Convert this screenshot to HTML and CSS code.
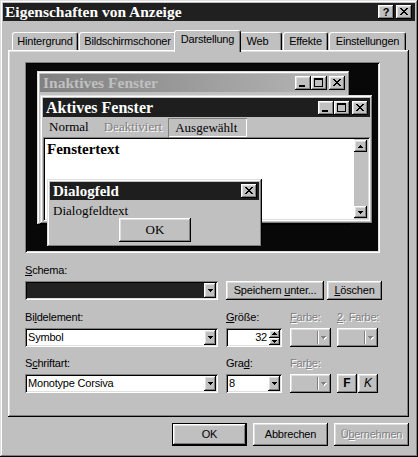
FILE: index.html
```html
<!DOCTYPE html>
<html lang="de">
<head>
<meta charset="utf-8">
<title>Eigenschaften von Anzeige</title>
<link rel="stylesheet" href="styles.css">
</head>
<body>
<div class="window">
  <div class="titlebar">
    <span class="title-text">Eigenschaften von Anzeige</span>
    <div class="cap-btns">
      <span class="cap-btn g-help">?</span>
      <span class="cap-btn g-close sep"><svg width="8" height="7" viewBox="0 0 8 7"><path d="M0 0h2v1H0zM6 0h2v1H6zM1 1h2v1H1zM5 1h2v1H5zM2 2h4v1H2zM3 3h2v1H3zM2 4h4v1H2zM1 5h2v1H1zM5 5h2v1H5zM0 6h2v1H0zM6 6h2v1H6z" fill="#000"/></svg></span>
    </div>
  </div>
  <div class="content">
    <div class="tabs">
      <div class="tab t-h">Hintergrund</div>
      <div class="tab t-b">Bildschirmschoner</div>
      <div class="tab sel">Darstellung</div>
      <div class="tab t-w">Web</div>
      <div class="tab t-e">Effekte</div>
      <div class="tab t-s">Einstellungen</div>
    </div>
    <div class="panel">
      <div class="preview">
        <div class="win w-inactive">
          <div class="caption inactive">
            <span>Inaktives Fenster</span>
            <div class="cap-btns">
              <span class="cap-btn g-min"><svg width="6" height="2" viewBox="0 0 6 2"><path d="M0 0h6v2H0z" fill="#000"/></svg></span>
              <span class="cap-btn g-max"><svg width="9" height="9" viewBox="0 0 9 9"><path d="M0 0h9v9H0zM1 2v6h7V2z" fill="#000" fill-rule="evenodd"/></svg></span>
              <span class="cap-btn g-close sep"><svg width="8" height="7" viewBox="0 0 8 7"><path d="M0 0h2v1H0zM6 0h2v1H6zM1 1h2v1H1zM5 1h2v1H5zM2 2h4v1H2zM3 3h2v1H3zM2 4h4v1H2zM1 5h2v1H1zM5 5h2v1H5zM0 6h2v1H0zM6 6h2v1H6z" fill="#000"/></svg></span>
            </div>
          </div>
        </div>
        <div class="win w-active">
          <div class="caption active">
            <span>Aktives Fenster</span>
            <div class="cap-btns">
              <span class="cap-btn g-min"><svg width="6" height="2" viewBox="0 0 6 2"><path d="M0 0h6v2H0z" fill="#000"/></svg></span>
              <span class="cap-btn g-max"><svg width="9" height="9" viewBox="0 0 9 9"><path d="M0 0h9v9H0zM1 2v6h7V2z" fill="#000" fill-rule="evenodd"/></svg></span>
              <span class="cap-btn g-close sep"><svg width="8" height="7" viewBox="0 0 8 7"><path d="M0 0h2v1H0zM6 0h2v1H6zM1 1h2v1H1zM5 1h2v1H5zM2 2h4v1H2zM3 3h2v1H3zM2 4h4v1H2zM1 5h2v1H1zM5 5h2v1H5zM0 6h2v1H0zM6 6h2v1H6z" fill="#000"/></svg></span>
            </div>
          </div>
          <div class="menu">
            <span class="mi">Normal</span>
            <span class="mi mi-dis">Deaktiviert</span>
            <span class="mi mi-sel">Ausgewählt</span>
          </div>
          <div class="textarea">
            <div class="ta-text">Fenstertext</div>
            <div class="scroll">
              <span class="sb-btn"><svg width="5" height="3" viewBox="0 0 5 3"><path d="M2 0h1v1h1v1h1v1H0V2h1V1h1z" fill="#000"/></svg></span>
              <span class="sb-btn"><svg width="5" height="3" viewBox="0 0 5 3"><path d="M0 0h5v1H4v1H3v1H2V2H1V1H0z" fill="#000"/></svg></span>
            </div>
          </div>
        </div>
        <div class="win w-dialog">
          <div class="caption dlg">
            <span>Dialogfeld</span>
            <div class="cap-btns">
              <span class="cap-btn g-close"><svg width="8" height="7" viewBox="0 0 8 7"><path d="M0 0h2v1H0zM6 0h2v1H6zM1 1h2v1H1zM5 1h2v1H5zM2 2h4v1H2zM3 3h2v1H3zM2 4h4v1H2zM1 5h2v1H1zM5 5h2v1H5zM0 6h2v1H0zM6 6h2v1H6z" fill="#000"/></svg></span>
            </div>
          </div>
          <div class="dlg-text">Dialogfeldtext</div>
          <div class="dlg-ok">OK</div>
        </div>
      </div>

      <div class="form">
        <div class="row">
          <div class="fld c1">
            <div class="lbl"><u>S</u>chema:</div>
            <div class="combo">
              <div class="combo-val dark"></div>
              <div class="combo-dd"><svg width="5" height="3" viewBox="0 0 5 3"><path d="M0 0h5v1H4v1H3v1H2V2H1V1H0z" fill="#000"/></svg></div>
            </div>
          </div>
          <div class="btn b-save">Speichern <u>u</u>nter...</div>
          <div class="btn b-del"><u>L</u>öschen</div>
        </div>

        <div class="row r2">
          <div class="fld c1">
            <div class="lbl">Bi<u>l</u>delement:</div>
            <div class="combo">
              <div class="combo-val">Symbol</div>
              <div class="combo-dd"><svg width="5" height="3" viewBox="0 0 5 3"><path d="M0 0h5v1H4v1H3v1H2V2H1V1H0z" fill="#000"/></svg></div>
            </div>
          </div>
          <div class="fld c2">
            <div class="lbl"><u>G</u>röße:</div>
            <div class="spin">
              <div class="spin-val">32</div>
              <div class="spin-btns">
                <span class="spin-btn"><svg width="5" height="3" viewBox="0 0 5 3"><path d="M2 0h1v1h1v1h1v1H0V2h1V1h1z" fill="#000"/></svg></span>
                <span class="spin-btn"><svg width="5" height="3" viewBox="0 0 5 3"><path d="M0 0h5v1H4v1H3v1H2V2H1V1H0z" fill="#000"/></svg></span>
              </div>
            </div>
          </div>
          <div class="fld c3">
            <div class="lbl dis"><u>F</u>arbe:</div>
            <div class="cbtn">
              <span class="cb-sw"></span><span class="cb-sep"></span>
              <span class="cb-arr"><svg width="6" height="4" viewBox="0 0 6 4"><path d="M1 1h5v1H5v1H4v1H3V3H2V2H1z" fill="#fff"/><path d="M0 0h5v1H4v1H3v1H2V2H1V1H0z" fill="#808080"/></svg></span>
            </div>
          </div>
          <div class="fld c4">
            <div class="lbl dis"><u>2</u>. Farbe:</div>
            <div class="cbtn">
              <span class="cb-sw"></span><span class="cb-sep"></span>
              <span class="cb-arr"><svg width="6" height="4" viewBox="0 0 6 4"><path d="M1 1h5v1H5v1H4v1H3V3H2V2H1z" fill="#fff"/><path d="M0 0h5v1H4v1H3v1H2V2H1V1H0z" fill="#808080"/></svg></span>
            </div>
          </div>
        </div>

        <div class="row r3">
          <div class="fld c1">
            <div class="lbl">S<u>c</u>hriftart:</div>
            <div class="combo">
              <div class="combo-val">Monotype Corsiva</div>
              <div class="combo-dd"><svg width="5" height="3" viewBox="0 0 5 3"><path d="M0 0h5v1H4v1H3v1H2V2H1V1H0z" fill="#000"/></svg></div>
            </div>
          </div>
          <div class="fld c2">
            <div class="lbl">Gra<u>d</u>:</div>
            <div class="combo">
              <div class="combo-val">8</div>
              <div class="combo-dd"><svg width="5" height="3" viewBox="0 0 5 3"><path d="M0 0h5v1H4v1H3v1H2V2H1V1H0z" fill="#000"/></svg></div>
            </div>
          </div>
          <div class="fld c3">
            <div class="lbl dis">Far<u>b</u>e:</div>
            <div class="cbtn">
              <span class="cb-sw"></span><span class="cb-sep"></span>
              <span class="cb-arr"><svg width="6" height="4" viewBox="0 0 6 4"><path d="M1 1h5v1H5v1H4v1H3V3H2V2H1z" fill="#fff"/><path d="M0 0h5v1H4v1H3v1H2V2H1V1H0z" fill="#808080"/></svg></span>
            </div>
          </div>
          <div class="fk-group">
            <div class="btn fk bold">F</div>
            <div class="btn fk ital">K</div>
          </div>
        </div>
      </div>
    </div>

    <div class="actions">
      <div class="pbtn def">OK</div>
      <div class="pbtn">Abbrechen</div>
      <div class="pbtn disabled">Ü<u>b</u>ernehmen</div>
    </div>
  </div>
</div>
</body>
</html>
```

FILE: styles.css
```css
* { box-sizing: border-box; }

body {
  margin: 0;
  background: #c0c0c0;
}

.window {
  width: 418px;
  height: 457px;
  padding: 3px;
  background: #c0c0c0;
  box-shadow: inset -1px -1px #000, inset 1px 1px #dfdfdf, inset -2px -2px #808080, inset 2px 2px #fff;
  font-family: "Liberation Sans", Arial, sans-serif;
  font-size: 11px;
  letter-spacing: -0.2px;
  color: #000;
}

/* ---------- title bar ---------- */
.titlebar {
  height: 18px;
  background: #202020;
  display: flex;
  align-items: center;
  justify-content: space-between;
  padding: 0 3px 0 2px;
}

.title-text {
  font-family: "Liberation Serif", "Times New Roman", serif;
  font-weight: bold;
  font-size: 15.5px;
  line-height: 18px;
  letter-spacing: 0;
  color: #fff;
  white-space: nowrap;
}

.cap-btns { display: flex; }

.cap-btn {
  display: block;
  width: 16px;
  height: 14px;
  background: #c0c0c0;
  box-shadow: inset -1px -1px #000, inset 1px 1px #fff, inset -2px -2px #808080, inset 2px 2px #dfdfdf;
}
.cap-btn.sep { margin-left: 2px; }
.cap-btn svg { display: block; }
.g-close { padding: 3px 0 0 4px; }
.g-min { padding: 9px 0 0 4px; }
.g-max { padding: 2px 0 0 3px; }
.g-help {
  font-weight: bold;
  font-size: 11px;
  line-height: 14px;
  text-align: center;
  letter-spacing: 0;
}

/* ---------- tabs ---------- */
.content { padding: 9px 6px 0 5px; }

.tabs {
  display: flex;
  align-items: flex-end;
  height: 20px;
  padding-left: 4px;
  position: relative;
  z-index: 1;
}

.tab {
  height: 18px;
  padding-top: 2px;
  line-height: 13px;
  text-align: center;
  white-space: nowrap;
  background: #c0c0c0;
  border-top: 1px solid #fff;
  border-left: 1px solid #fff;
  border-right: 1px solid #000;
  border-radius: 3px 3px 0 0;
  box-shadow: inset -1px 0 #808080;
}
.t-h { width: 66px; margin-right: 1px; }
.t-b { width: 97px; }
.tab.sel {
  width: 67px;
  height: 22px;
  margin: 0 -2px -2px;
  position: relative;
  z-index: 2;
}
.t-w { width: 43px; margin-right: 1px; padding-right: 6px; }
.t-e { width: 45px; margin-right: 1px; }
.t-s { width: 77px; }

/* ---------- panel ---------- */
.panel {
  width: 401px;
  height: 367px;
  padding: 12px 0 0 17px;
  box-shadow: inset -1px -1px #000, inset 1px 1px #fff, inset -2px -2px #808080, inset 2px 2px #dfdfdf;
}

.preview {
  position: relative;
  width: 355px;
  height: 191px;
  background: #080808;
  box-shadow: inset 1px 1px #808080, inset -1px -1px #fff, inset 2px 2px #000, inset -2px -2px #dfdfdf;
}

.win {
  position: absolute;
  display: flex;
  flex-direction: column;
  padding: 3px;
  background: #c0c0c0;
  box-shadow: inset -1px -1px #000, inset 1px 1px #dfdfdf, inset -2px -2px #808080, inset 2px 2px #fff;
}
.w-inactive { left: 12px; top: 9px; width: 313px; height: 154px; }
.w-active { left: 15px; top: 33px; width: 333px; height: 129px; }
.w-dialog { left: 22px; top: 117px; width: 215px; height: 68px; }

.caption {
  flex: none;
  display: flex;
  align-items: center;
  justify-content: space-between;
  padding: 0 2px 0 3px;
  background: #1e1e1e;
  color: #fff;
  font-family: "Liberation Serif", "Times New Roman", serif;
  font-weight: bold;
  letter-spacing: 0;
  white-space: nowrap;
}
.caption.inactive {
  height: 18px;
  font-size: 15.5px;
  background: linear-gradient(90deg, #808080, #b8b8b8);
  color: #c0c0c0;
}
.caption.active { height: 19px; font-size: 16px; }
.caption.dlg { height: 18px; font-size: 15px; }

.menu {
  flex: none;
  height: 20px;
  display: flex;
  align-items: center;
  padding-left: 6px;
  font-family: "Liberation Serif", "Times New Roman", serif;
  font-size: 13px;
  letter-spacing: 0;
  white-space: nowrap;
}
.mi-dis {
  margin-left: 15px;
  color: #808080;
  text-shadow: 1px 1px #fff;
}
.mi-sel {
  align-self: flex-end;
  margin-left: 6px;
  width: 79px;
  height: 19px;
  line-height: 19px;
  padding-left: 7px;
  box-shadow: inset 1px 1px #808080, inset -1px -1px #fff;
}

.textarea {
  flex: 1;
  display: flex;
  padding: 2px;
  background: #fff;
  box-shadow: inset 1px 1px #808080, inset -1px -1px #fff, inset 2px 2px #000, inset -2px -2px #dfdfdf;
}
.ta-text {
  flex: 1;
  padding: 1px 0 0 2px;
  font-family: "Liberation Serif", "Times New Roman", serif;
  font-weight: bold;
  font-size: 15px;
  line-height: 18px;
  letter-spacing: 0;
}
.scroll {
  width: 14px;
  display: flex;
  flex-direction: column;
  justify-content: space-between;
  padding: 1px 0;
  background: #c0c0c0;
}
.sb-btn {
  width: 13px;
  height: 12px;
  display: flex;
  align-items: center;
  justify-content: center;
  background: #c0c0c0;
  box-shadow: inset -1px -1px #000, inset 1px 1px #fff, inset -2px -2px #808080, inset 2px 2px #dfdfdf;
}
.sb-btn svg { display: block; }

.dlg-text {
  padding: 4px 0 0 3px;
  height: 18px;
  line-height: 14px;
  font-family: "Liberation Serif", "Times New Roman", serif;
  font-size: 13px;
  letter-spacing: 0;
}
.dlg-ok {
  margin-left: 69px;
  width: 72px;
  height: 24px;
  line-height: 24px;
  text-align: center;
  font-family: "Liberation Serif", "Times New Roman", serif;
  font-size: 13px;
  letter-spacing: 0;
  box-shadow: inset -1px -1px #000, inset 1px 1px #fff, inset -2px -2px #808080, inset 2px 2px #dfdfdf;
}

/* ---------- form ---------- */
.form { margin-top: 11px; }
.row { display: flex; align-items: flex-end; }
.r2 { margin-top: 11px; }
.r3 { margin-top: 10px; }

.fld { display: flex; flex-direction: column; }
.lbl {
  height: 13px;
  line-height: 13px;
  margin-bottom: 4px;
  white-space: nowrap;
}
.lbl.dis { color: #808080; text-shadow: 1px 1px #fff; }

.c1 { width: 193px; }
.c2 { width: 56px; margin-left: 8px; }
.c3 { width: 41px; margin-left: 8px; }
.c4 { width: 41px; margin-left: 6px; }

.combo {
  height: 19px;
  display: flex;
  padding: 2px;
  background: #fff;
  box-shadow: inset 1px 1px #808080, inset -1px -1px #fff, inset 2px 2px #000, inset -2px -2px #dfdfdf;
}
.combo-val {
  flex: 1;
  padding-left: 1px;
  line-height: 15px;
  white-space: nowrap;
  overflow: hidden;
}
.combo-val.dark { background: #222; }
.combo-dd {
  width: 12px;
  height: 15px;
  display: flex;
  align-items: center;
  justify-content: center;
  background: #c0c0c0;
  box-shadow: inset -1px -1px #000, inset 1px 1px #fff, inset -2px -2px #808080, inset 2px 2px #dfdfdf;
}
.combo-dd svg, .spin-btn svg, .cb-arr svg { display: block; }

.btn {
  height: 19px;
  line-height: 19px;
  text-align: center;
  white-space: nowrap;
  background: #c0c0c0;
  box-shadow: inset -1px -1px #000, inset 1px 1px #fff, inset -2px -2px #808080, inset 2px 2px #dfdfdf;
}
.b-save { width: 98px; margin-left: 8px; }
.b-del { width: 55px; margin-left: 3px; }

.spin {
  height: 19px;
  display: flex;
  padding: 2px;
  background: #fff;
  box-shadow: inset 1px 1px #808080, inset -1px -1px #fff, inset 2px 2px #000, inset -2px -2px #dfdfdf;
}
.spin-val {
  flex: 1;
  text-align: right;
  padding-right: 2px;
  line-height: 15px;
}
.spin-btns {
  width: 11px;
  display: flex;
  flex-direction: column;
}
.spin-btn {
  flex: 1;
  display: flex;
  align-items: center;
  justify-content: center;
  background: #c0c0c0;
  box-shadow: inset -1px -1px #000, inset 1px 1px #fff, inset -2px -2px #808080, inset 2px 2px #dfdfdf;
}

.cbtn {
  height: 19px;
  display: flex;
  align-items: center;
  padding: 3px;
  background: #c0c0c0;
  box-shadow: inset -1px -1px #000, inset 1px 1px #fff, inset -2px -2px #808080, inset 2px 2px #dfdfdf;
}
.cb-sw { flex: 1; }
.cb-sep {
  width: 2px;
  height: 13px;
  border-left: 1px solid #808080;
  border-right: 1px solid #fff;
}
.cb-arr {
  width: 9px;
  display: flex;
  justify-content: center;
}

.fk-group { display: flex; gap: 1px; margin-left: 6px; }
.fk { width: 20px; letter-spacing: 0; font-size: 12px; }
.fk.bold { font-weight: bold; }
.fk.ital { font-style: italic; }

/* ---------- bottom buttons ---------- */
.actions {
  display: flex;
  justify-content: flex-end;
  gap: 6px;
  margin-top: 6px;
}
.pbtn {
  width: 75px;
  height: 23px;
  line-height: 23px;
  text-align: center;
  background: #c0c0c0;
  box-shadow: inset -1px -1px #000, inset 1px 1px #fff, inset -2px -2px #808080, inset 2px 2px #dfdfdf;
}
.pbtn.def {
  box-shadow: inset 0 0 0 1px #000, inset -2px -2px #000, inset 2px 2px #fff, inset -3px -3px #808080, inset 3px 3px #dfdfdf;
}
.pbtn.disabled { color: #808080; text-shadow: 1px 1px #fff; }
```
